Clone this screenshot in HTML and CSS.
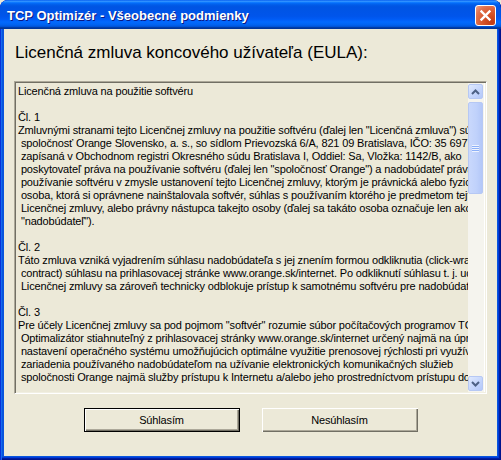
FILE: index.html
```html
<!DOCTYPE html>
<html lang="sk">
<head>
  <meta charset="UTF-8" />
  <meta name="viewport" content="width=device-width, initial-scale=1.0" />
  <title>TCP Optimizér - Všeobecné podmienky</title>
  <link rel="stylesheet" href="styles.css">
</head>
<body>
  <div class="window">
    <div class="titlebar">
      <span class="title">TCP Optimizér - Všeobecné podmienky</span>
      <span class="close">
        <svg width="13" height="13" viewBox="0 0 13 13">
          <path d="M2.5 2.5 L10.5 10.5 M10.5 2.5 L2.5 10.5" stroke="#fff" stroke-width="2.4" stroke-linecap="square" />
        </svg>
      </span>
    </div>
    <div class="client">
      <h1 class="heading">Licenčná zmluva koncového užívateľa (EULA):</h1>
      <div class="eula">
<pre class="eula-text">
Licenčná zmluva na použitie softvéru

Čl. 1
Zmluvnými stranami tejto Licenčnej zmluvy na použitie softvéru (ďalej len "Licenčná zmluva") sú:
 spoločnosť Orange Slovensko, a. s., so sídlom Prievozská 6/A, 821 09 Bratislava, IČO: 35 697 270,
 zapísaná v Obchodnom registri Okresného súdu Bratislava I, Oddiel: Sa, Vložka: 1142/B, ako
 poskytovateľ práva na používanie softvéru (ďalej len "spoločnosť Orange") a nadobúdateľ práva na
 používanie softvéru v zmysle ustanovení tejto Licenčnej zmluvy, ktorým je právnická alebo fyzická
 osoba, ktorá si oprávnene nainštalovala softvér, súhlas s používaním ktorého je predmetom tejto
 Licenčnej zmluvy, alebo právny nástupca takejto osoby (ďalej sa takáto osoba označuje len ako
 "nadobúdateľ").

Čl. 2
Táto zmluva vzniká vyjadrením súhlasu nadobúdateľa s jej znením formou odkliknutia (click-wrap
 contract) súhlasu na prihlasovacej stránke www.orange.sk/internet. Po odkliknutí súhlasu t. j. udelení
 Licenčnej zmluvy sa zároveň technicky odblokuje prístup k samotnému softvéru pre nadobúdateľa.

Čl. 3
Pre účely Licenčnej zmluvy sa pod pojmom "softvér" rozumie súbor počítačových programov TCP
 Optimalizátor stiahnuteľný z prihlasovacej stránky www.orange.sk/internet určený najmä na úpravu
 nastavení operačného systému umožňujúcich optimálne využitie prenosovej rýchlosti pri využívaní
 zariadenia používaného nadobúdateľom na užívanie elektronických komunikačných služieb
 spoločnosti Orange najmä služby prístupu k Internetu a/alebo jeho prostredníctvom prístupu do
</pre>
        <div class="scrollbar">
          <div class="sb-btn">
            <svg width="9" height="6" viewBox="0 0 9 6"><path d="M1 5 L4.5 1.5 L8 5" fill="none" stroke="#4d6185" stroke-width="2" /></svg>
          </div>
          <div class="sb-track">
            <div class="sb-thumb">
              <span class="grip"></span>
            </div>
          </div>
          <div class="sb-btn">
            <svg width="9" height="6" viewBox="0 0 9 6"><path d="M1 1 L4.5 4.5 L8 1" fill="none" stroke="#4d6185" stroke-width="2" /></svg>
          </div>
        </div>
      </div>
      <div class="buttons">
        <button class="btn btn-default">Súhlasím</button>
        <button class="btn">Nesúhlasím</button>
      </div>
    </div>
  </div>
</body>
</html>
```
FILE: styles.css
```css
html, body {
  margin: 0;
  background: #ece9d8;
}
body {
  font-family: "Liberation Sans", Arial, sans-serif;
}
.window {
  width: 501px;
  height: 460px;
  display: flex;
  flex-direction: column;
  background: #0855dd;
  border-radius: 8px 8px 0 0;
  box-shadow: inset 1px 0 #0831d9, inset 2px 0 #166aee,
              inset -1px -1px #00138c, inset -2px -2px #001ea0, inset -3px -3px #003bda;
  overflow: hidden;
}
.titlebar {
  height: 29px;
  flex: none;
  display: flex;
  align-items: center;
  justify-content: space-between;
  padding: 0 5px 0 7px;
  background: linear-gradient(to bottom, #0058ee 0%, #3593ff 4%, #288eff 6%, #127dff 8%, #036ffc 10%,
    #0262ee 14%, #0057e5 20%, #0054e3 24%, #0055eb 56%, #005bf5 66%, #026afe 76%, #0062ef 86%,
    #0052d6 92%, #0040ab 94%, #003092 100%);
  border-radius: 8px 8px 0 0;
}
.title {
  color: #fff;
  font-weight: bold;
  font-size: 13px;
  text-shadow: 1px 1px #0a1883;
  margin-top: 1px;
}
.close {
  width: 21px;
  height: 21px;
  box-sizing: border-box;
  border: 1px solid #fff;
  border-radius: 3px;
  display: flex;
  align-items: center;
  justify-content: center;
  background: radial-gradient(circle at 85% 85%, #c13a12 0%, #d8582d 45%, #e27452 75%, #f1a38a 100%);
  margin-top: 1px;
}
.client {
  flex: 1;
  margin: 0 4px 4px;
  background: #ece9d8;
  padding: 14px 10px 0;
  display: flex;
  flex-direction: column;
}
.heading {
  margin: 0 0 18px 1px;
  font-size: 17px;
  font-weight: normal;
  line-height: 20px;
  color: #000;
}
.eula {
  height: 313px;
  box-sizing: border-box;
  display: flex;
  border: 1px solid;
  border-color: #aca899 #fff #fff #aca899;
  box-shadow: inset 1px 1px #716f64, inset -1px -1px #f1efe2;
  padding: 1px;
}
.eula-text {
  flex: 1;
  margin: 0;
  padding: 2px 0 0 2px;
  overflow: hidden;
  white-space: pre;
  font-family: "Liberation Sans", Arial, sans-serif;
  font-size: 11px;
  letter-spacing: -0.15px;
  line-height: 13px;
  color: #000;
}
.scrollbar {
  width: 17px;
  flex: none;
  box-sizing: border-box;
  display: flex;
  flex-direction: column;
  padding: 1px 1px 1px 0;
  background: #f5f4ee;
  border-right: 1px solid #fff;
}
.sb-btn {
  height: 15px;
  flex: none;
  box-sizing: border-box;
  border: 1px solid #b6c8f4;
  border-radius: 2px;
  background: linear-gradient(135deg, #dfe9fe 0%, #c3d4fc 60%, #b4c8f9 100%);
  display: flex;
  align-items: center;
  justify-content: center;
}
.sb-track {
  flex: 1;
  padding: 3px 0;
}
.sb-thumb {
  height: 92px;
  box-sizing: border-box;
  border: 1px solid #b6c8f4;
  border-radius: 2px;
  background: linear-gradient(to right, #c9d8fc 0%, #bfd1fb 60%, #b3c7f8 100%);
  display: flex;
  align-items: center;
  justify-content: center;
}
.grip {
  width: 7px;
  height: 7px;
  background: repeating-linear-gradient(to bottom, #eef3fe 0 1px, #8cb0f8 1px 2px);
}
.buttons {
  display: flex;
  justify-content: center;
  gap: 22px;
  margin-top: 14px;
}
.btn {
  width: 156px;
  height: 24px;
  box-sizing: border-box;
  border: 0;
  margin: 0;
  padding: 0;
  background: #ece9d8;
  font-family: "Liberation Sans", Arial, sans-serif;
  font-size: 11px;
  letter-spacing: -0.15px;
  color: #000;
  box-shadow: inset 1px 1px #fff, inset -1px -1px #716f64, inset -2px -2px #aca899;
}
.btn-default {
  border: 1px solid #000;
}
```
